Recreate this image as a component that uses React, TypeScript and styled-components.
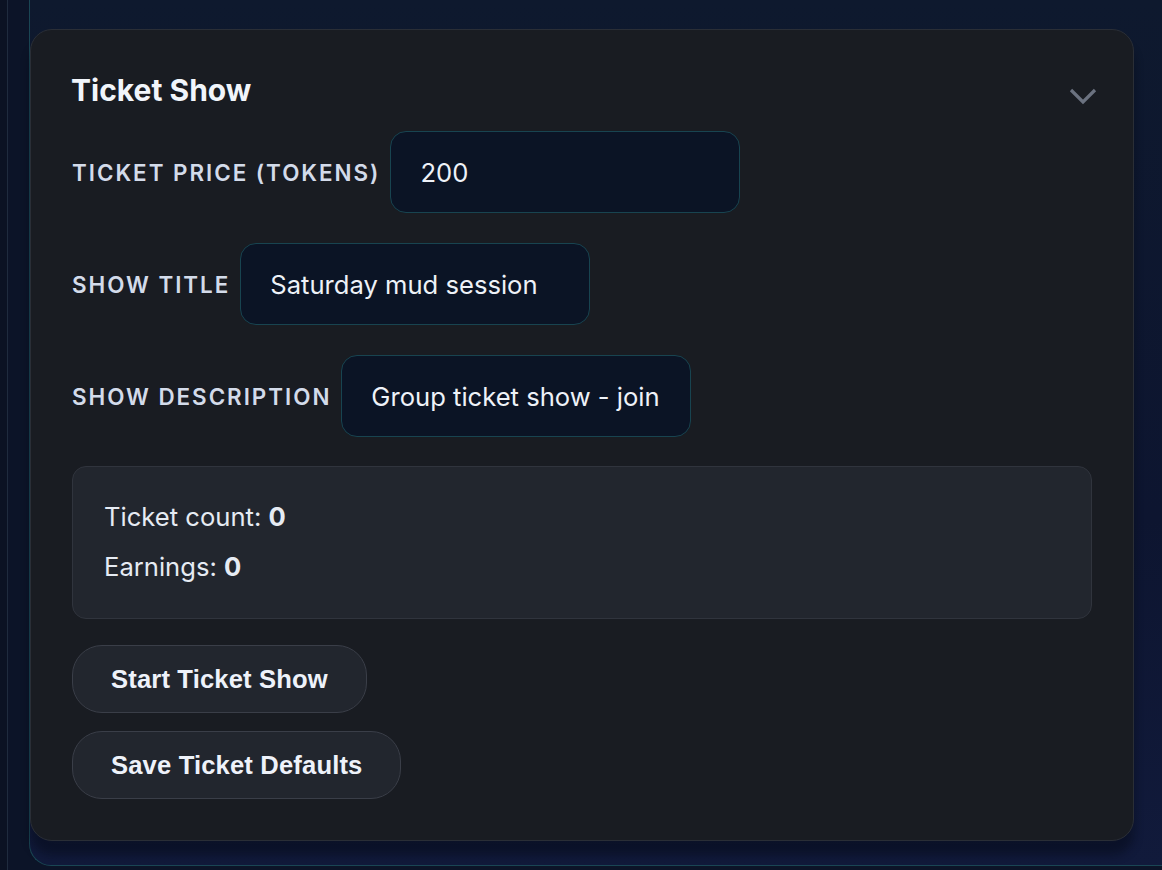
import * as React from 'react';
import styled, { createGlobalStyle } from 'styled-components';

const GlobalStyle = createGlobalStyle`
    html, body {
        margin: 0;
        padding: 0;
        height: 100%;
        overflow: hidden;
        background: #0b1223;
    }
    body {
        font-family: Inter, "Noto Sans", sans-serif;
        color: #e6ecf5;
    }
`;

const OuterFrame = styled.div`
    margin-left: 7px;
    width: 1300px;
    height: 900px;
    box-sizing: border-box;
    border-left: 1px solid #1f2b3e;
    border-bottom: 1px solid #1f2b3e;
    border-bottom-left-radius: 24px;
    background: #0c1428;
    padding-left: 21px;
`;

const InnerFrame = styled.div`
    width: 1280px;
    height: 866px;
    box-sizing: border-box;
    border-left: 1px solid #1a4654;
    border-bottom: 1px solid #1a4654;
    border-bottom-left-radius: 22px;
    background: linear-gradient(180deg, #0e192e 0%, #0d1530 60%, #111a3b 100%);
    padding-top: 29px;
`;

const Card = styled.section`
    width: 1104px;
    box-sizing: border-box;
    background: #191c22;
    border: 1px solid #2a2e36;
    border-radius: 22px;
    padding: 42px 41px 41px 41px;
    box-shadow: 0 14px 10px rgba(5, 8, 20, 0.45);
    display: flex;
    flex-direction: column;
`;

const Header = styled.div`
    display: flex;
    align-items: center;
    justify-content: space-between;
    height: 36px;
    margin-right: -5px;
    margin-bottom: 23px;
`;

const Title = styled.h2`
    margin: 0 0 0 -1px;
    font-size: 30px;
    line-height: 36px;
    font-weight: 700;
    color: #f1f5fb;
`;

const Chevron = styled.svg`
    width: 28px;
    height: 18px;
    margin-top: 12px;
`;

const Field = styled.label`
    display: flex;
    align-items: center;
    gap: 10px;
    margin-bottom: 30px;
`;

const FieldLabel = styled.span`
    font-size: 22.4px;
    font-weight: 600;
    letter-spacing: 0.088em;
    text-transform: uppercase;
    color: #d3dbea;
`;

const Input = styled.input`
    width: 350px;
    height: 82px;
    box-sizing: border-box;
    padding: 0 29px;
    border: 1px solid #184450;
    border-radius: 16px;
    background: #0b1425;
    color: #eef2f8;
    font-family: Inter, "Noto Sans", sans-serif;
    font-size: 25.6px;
    outline: none;
`;

const Stats = styled.div`
    margin-top: -1px;
    display: flex;
    flex-direction: column;
    gap: 12px;
    padding: 31px 31px 32px;
    background: #22262e;
    border: 1px solid #30343d;
    border-radius: 14px;
    margin-bottom: 26px;
`;

const StatLine = styled.p`
    margin: 0;
    font-size: 25.6px;
    line-height: 38px;
    color: #e6ebf3;
`;

const Buttons = styled.div`
    display: flex;
    flex-direction: column;
    align-items: flex-start;
    gap: 18px;
`;

const Button = styled.button`
    height: 68px;
    padding: 0 38px;
    border: 1px solid #3a3e48;
    border-radius: 30px;
    background: #22262e;
    color: #eef2fa;
    font-family: "Liberation Sans", Arial, sans-serif;
    font-size: 25.6px;
    font-weight: 700;
    letter-spacing: 0.15px;
    cursor: pointer;
`;

export default function App() {
    const [price, setPrice] = React.useState('200');
    const [title, setTitle] = React.useState('Saturday mud session');
    const [description, setDescription] = React.useState('Group ticket show - join now!');

    return (
        <>
            <GlobalStyle />
            <OuterFrame>
                <InnerFrame>
                    <Card>
                        <Header>
                            <Title>Ticket Show</Title>
                            <Chevron viewBox="0 0 28 18" fill="none">
                                <polyline
                                    points="2,3 14,15 26,3"
                                    stroke="#6b7280"
                                    strokeWidth="3.2"
                                    strokeLinecap="butt"
                                    strokeLinejoin="miter"
                                />
                            </Chevron>
                        </Header>
                        <Field>
                            <FieldLabel>Ticket Price (Tokens)</FieldLabel>
                            <Input value={price} onChange={(e) => setPrice(e.target.value)} />
                        </Field>
                        <Field>
                            <FieldLabel>Show Title</FieldLabel>
                            <Input value={title} onChange={(e) => setTitle(e.target.value)} />
                        </Field>
                        <Field>
                            <FieldLabel>Show Description</FieldLabel>
                            <Input value={description} onChange={(e) => setDescription(e.target.value)} />
                        </Field>
                        <Stats>
                            <StatLine>
                                Ticket count: <strong>0</strong>
                            </StatLine>
                            <StatLine>
                                Earnings: <strong>0</strong>
                            </StatLine>
                        </Stats>
                        <Buttons>
                            <Button>Start Ticket Show</Button>
                            <Button>Save Ticket Defaults</Button>
                        </Buttons>
                    </Card>
                </InnerFrame>
            </OuterFrame>
        </>
    );
}
